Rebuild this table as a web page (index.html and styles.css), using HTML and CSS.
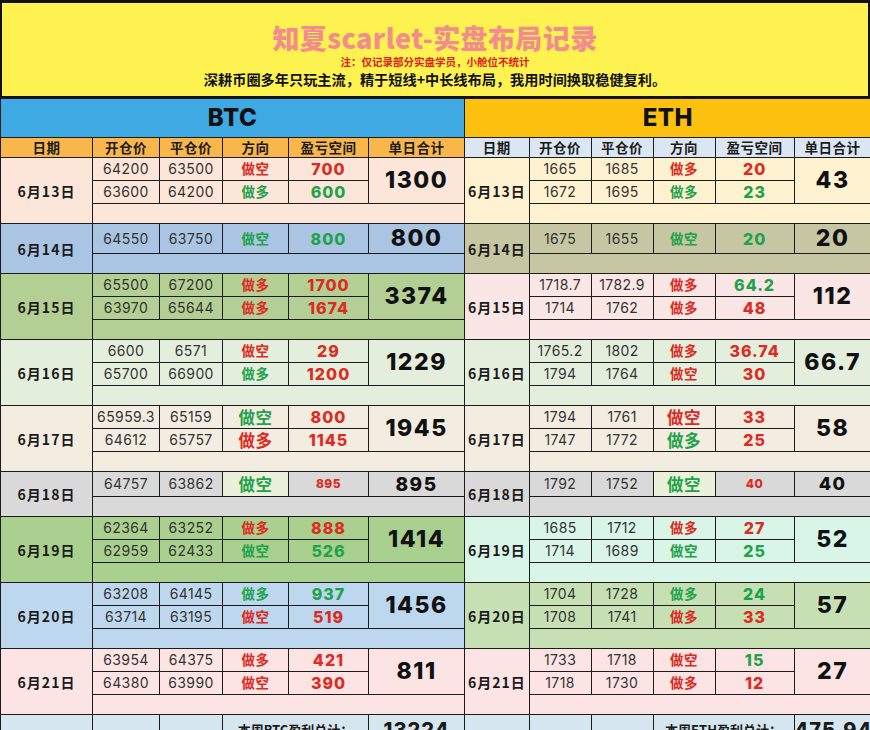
FILE: index.html
```html
<!DOCTYPE html>
<html lang="zh-CN">
<head>
<meta charset="utf-8">
<title>知夏scarlet-实盘布局记录</title>
<link rel="stylesheet" href="styles.css">
</head>
<body>
<header class="banner">
  <h1 class="title">知夏scarlet-实盘布局记录</h1>
  <p class="note">注：仅记录部分实盘学员，小舱位不统计</p>
  <p class="slogan">深耕币圈多年只玩主流，精于短线+中长线布局，我用时间换取稳健复利。</p>
</header>
<main class="sheet">
  <table class="book btc">
    <colgroup><col><col><col><col><col><col></colgroup>
    <thead>
      <tr class="coin-row"><th colspan="6" class="coin">BTC</th></tr>
      <tr class="cols"><th>日期</th><th>开仓价</th><th>平仓价</th><th>方向</th><th>盈亏空间</th><th>单日合计</th></tr>
    </thead>
    <tbody class="peach">
      <tr class="t"><td rowspan="3" class="date">6月13日</td><td class="px">64200</td><td class="px">63500</td><td class="dir r">做空</td><td class="pl r">700</td><td rowspan="2" class="total">1300</td></tr>
      <tr class="t"><td class="px">63600</td><td class="px">64200</td><td class="dir g">做多</td><td class="pl g">600</td></tr>
      <tr class="gap"><td colspan="5"></td></tr>
    </tbody>
    <tbody class="steel">
      <tr class="t1"><td rowspan="2" class="date">6月14日</td><td class="px">64550</td><td class="px">63750</td><td class="dir g">做空</td><td class="pl g">800</td><td class="total">800</td></tr>
      <tr class="gap"><td colspan="5"></td></tr>
    </tbody>
    <tbody class="olive">
      <tr class="t"><td rowspan="3" class="date">6月15日</td><td class="px">65500</td><td class="px">67200</td><td class="dir r">做多</td><td class="pl r">1700</td><td rowspan="2" class="total">3374</td></tr>
      <tr class="t"><td class="px">63970</td><td class="px">65644</td><td class="dir r">做多</td><td class="pl r">1674</td></tr>
      <tr class="gap"><td colspan="5"></td></tr>
    </tbody>
    <tbody class="mintpale">
      <tr class="t"><td rowspan="3" class="date">6月16日</td><td class="px">6600</td><td class="px">6571</td><td class="dir r">做空</td><td class="pl r">29</td><td rowspan="2" class="total">1229</td></tr>
      <tr class="t"><td class="px">65700</td><td class="px">66900</td><td class="dir g">做多</td><td class="pl r">1200</td></tr>
      <tr class="gap"><td colspan="5"></td></tr>
    </tbody>
    <tbody class="beige">
      <tr class="t"><td rowspan="3" class="date">6月17日</td><td class="px">65959.3</td><td class="px">65159</td><td class="dir big g">做空</td><td class="pl r">800</td><td rowspan="2" class="total">1945</td></tr>
      <tr class="t"><td class="px">64612</td><td class="px">65757</td><td class="dir big r">做多</td><td class="pl r">1145</td></tr>
      <tr class="gap"><td colspan="5"></td></tr>
    </tbody>
    <tbody class="grey">
      <tr class="t2"><td rowspan="2" class="date">6月18日</td><td class="px">64757</td><td class="px">63862</td><td class="dir big g hl">做空</td><td class="pl sm r">895</td><td class="total mid">895</td></tr>
      <tr class="gap"><td colspan="5"></td></tr>
    </tbody>
    <tbody class="green">
      <tr class="t"><td rowspan="3" class="date">6月19日</td><td class="px">62364</td><td class="px">63252</td><td class="dir r">做多</td><td class="pl r">888</td><td rowspan="2" class="total">1414</td></tr>
      <tr class="t"><td class="px">62959</td><td class="px">62433</td><td class="dir g">做空</td><td class="pl g">526</td></tr>
      <tr class="gap"><td colspan="5"></td></tr>
    </tbody>
    <tbody class="sky">
      <tr class="t"><td rowspan="3" class="date">6月20日</td><td class="px">63208</td><td class="px">64145</td><td class="dir g">做多</td><td class="pl g">937</td><td rowspan="2" class="total">1456</td></tr>
      <tr class="t"><td class="px">63714</td><td class="px">63195</td><td class="dir r">做空</td><td class="pl r">519</td></tr>
      <tr class="gap"><td colspan="5"></td></tr>
    </tbody>
    <tbody class="rose">
      <tr class="t"><td rowspan="3" class="date">6月21日</td><td class="px">63954</td><td class="px">64375</td><td class="dir r">做多</td><td class="pl r">421</td><td rowspan="2" class="total">811</td></tr>
      <tr class="t"><td class="px">64380</td><td class="px">63990</td><td class="dir r">做空</td><td class="pl r">390</td></tr>
      <tr class="gap"><td colspan="5"></td></tr>
    </tbody>
    <tbody class="sum">
      <tr class="s"><td></td><td></td><td></td><td colspan="2" class="label">本周BTC盈利总计：</td><td class="grand">13224</td></tr>
    </tbody>
  </table>

  <table class="book eth">
    <colgroup><col><col><col><col><col><col></colgroup>
    <thead>
      <tr class="coin-row"><th colspan="6" class="coin">ETH</th></tr>
      <tr class="cols"><th>日期</th><th>开仓价</th><th>平仓价</th><th>方向</th><th>盈亏空间</th><th>单日合计</th></tr>
    </thead>
    <tbody class="cream">
      <tr class="t"><td rowspan="3" class="date">6月13日</td><td class="px">1665</td><td class="px">1685</td><td class="dir r">做多</td><td class="pl r">20</td><td rowspan="2" class="total">43</td></tr>
      <tr class="t"><td class="px">1672</td><td class="px">1695</td><td class="dir g">做多</td><td class="pl g">23</td></tr>
      <tr class="gap"><td colspan="5"></td></tr>
    </tbody>
    <tbody class="khaki">
      <tr class="t1"><td rowspan="2" class="date">6月14日</td><td class="px">1675</td><td class="px">1655</td><td class="dir g">做空</td><td class="pl g">20</td><td class="total">20</td></tr>
      <tr class="gap"><td colspan="5"></td></tr>
    </tbody>
    <tbody class="blush">
      <tr class="t"><td rowspan="3" class="date">6月15日</td><td class="px">1718.7</td><td class="px">1782.9</td><td class="dir r">做多</td><td class="pl g">64.2</td><td rowspan="2" class="total">112</td></tr>
      <tr class="t"><td class="px">1714</td><td class="px">1762</td><td class="dir r">做多</td><td class="pl r">48</td></tr>
      <tr class="gap"><td colspan="5"></td></tr>
    </tbody>
    <tbody class="mintpale">
      <tr class="t"><td rowspan="3" class="date">6月16日</td><td class="px">1765.2</td><td class="px">1802</td><td class="dir r">做多</td><td class="pl r">36.74</td><td rowspan="2" class="total">66.7</td></tr>
      <tr class="t"><td class="px">1794</td><td class="px">1764</td><td class="dir r">做空</td><td class="pl r">30</td></tr>
      <tr class="gap"><td colspan="5"></td></tr>
    </tbody>
    <tbody class="beige">
      <tr class="t"><td rowspan="3" class="date">6月17日</td><td class="px">1794</td><td class="px">1761</td><td class="dir big r">做空</td><td class="pl r">33</td><td rowspan="2" class="total">58</td></tr>
      <tr class="t"><td class="px">1747</td><td class="px">1772</td><td class="dir big g">做多</td><td class="pl r">25</td></tr>
      <tr class="gap"><td colspan="5"></td></tr>
    </tbody>
    <tbody class="grey">
      <tr class="t2"><td rowspan="2" class="date">6月18日</td><td class="px">1792</td><td class="px">1752</td><td class="dir big g hl">做空</td><td class="pl sm r">40</td><td class="total small">40</td></tr>
      <tr class="gap"><td colspan="5"></td></tr>
    </tbody>
    <tbody class="aqua">
      <tr class="t"><td rowspan="3" class="date">6月19日</td><td class="px">1685</td><td class="px">1712</td><td class="dir r">做多</td><td class="pl r">27</td><td rowspan="2" class="total">52</td></tr>
      <tr class="t"><td class="px">1714</td><td class="px">1689</td><td class="dir g">做空</td><td class="pl g">25</td></tr>
      <tr class="gap"><td colspan="5"></td></tr>
    </tbody>
    <tbody class="leaf">
      <tr class="t"><td rowspan="3" class="date">6月20日</td><td class="px">1704</td><td class="px">1728</td><td class="dir g">做多</td><td class="pl g">24</td><td rowspan="2" class="total">57</td></tr>
      <tr class="t"><td class="px">1708</td><td class="px">1741</td><td class="dir r">做多</td><td class="pl r">33</td></tr>
      <tr class="gap"><td colspan="5"></td></tr>
    </tbody>
    <tbody class="rose">
      <tr class="t"><td rowspan="3" class="date">6月21日</td><td class="px">1733</td><td class="px">1718</td><td class="dir r">做空</td><td class="pl g">15</td><td rowspan="2" class="total">27</td></tr>
      <tr class="t"><td class="px">1718</td><td class="px">1730</td><td class="dir r">做多</td><td class="pl r">12</td></tr>
      <tr class="gap"><td colspan="5"></td></tr>
    </tbody>
    <tbody class="sum">
      <tr class="s"><td></td><td></td><td></td><td colspan="2" class="label">本周ETH盈利总计：</td><td class="grand">475.94</td></tr>
    </tbody>
  </table>
</main>
</body>
</html>
```

FILE: styles.css
```css
html, body {
  margin: 0;
  padding: 0;
  overflow: hidden;
  background: #ffffff;
}
body {
  width: 870px;
  font-family: "Noto Sans CJK SC", "Noto Sans", sans-serif;
  color: #1a1a1a;
}

/* ---------- banner ---------- */
.banner {
  box-sizing: border-box;
  height: 98px;
  background: #fdf24f;
  border: 2px solid #111;
  border-top-width: 3px;
  padding-top: 19px;
  text-align: center;
}
.title {
  margin: 0;
  font-size: 27px;
  line-height: 31px;
  font-weight: 900;
  color: #f38d8d;
  letter-spacing: 0.4px;
}
.note {
  margin: 3px 0 0;
  font-size: 10.5px;
  line-height: 12px;
  font-weight: 700;
  color: #e0201c;
}
.slogan {
  margin: 3px 0 0;
  font-size: 14.2px;
  line-height: 16px;
  font-weight: 700;
  color: #111;
}

/* ---------- sheet ---------- */
.sheet {
  display: flex;
  align-items: flex-start;
}
.book {
  border-collapse: collapse;
  table-layout: fixed;
  flex: none;
}
.btc { width: 464px; }
.eth { width: 406px; }
.btc col:nth-child(1) { width: 92px; }
.btc col:nth-child(2) { width: 67px; }
.btc col:nth-child(3) { width: 63px; }
.btc col:nth-child(4) { width: 66px; }
.btc col:nth-child(5) { width: 80px; }
.btc col:nth-child(6) { width: 96px; }
.eth col:nth-child(1) { width: 64px; }
.eth col:nth-child(2) { width: 62px; }
.eth col:nth-child(3) { width: 62px; }
.eth col:nth-child(4) { width: 62px; }
.eth col:nth-child(5) { width: 79px; }
.eth col:nth-child(6) { width: 77px; }

.book th, .book td {
  border: 1px solid #1b1b1b;
  padding: 0;
  text-align: center;
  vertical-align: middle;
  white-space: nowrap;
  overflow: hidden;
  line-height: 1;
}
.eth > thead > tr > th:first-child,
.eth > tbody > tr > td:first-child {
  border-left: none;
}

.coin-row { height: 39px; }
.coin {
  font-family: "Inter", "Noto Sans", sans-serif;
  font-size: 24px;
  font-weight: 800;
  color: #111;
  letter-spacing: 0.5px;
}
.btc .coin { background: #3ea9e2; }
.eth .coin { background: #fdc00f; }

.cols { height: 20px; }
.cols th {
  font-size: 13.5px;
  font-weight: 700;
  color: #1b1b1b;
  letter-spacing: 0.5px;
}
.btc .cols th { background: #f8b64b; }
.eth .cols th { background: #dbe6f3; }

.t { height: 23px; }
.t1 { height: 30px; }
.t2 { height: 25px; }
.gap { height: 20px; }
.s { height: 30px; }

.date {
  font-size: 14px;
  font-weight: 700;
  letter-spacing: 1px;
  color: #1b1b1b;
}
.px {
  font-family: "Inter", "Noto Sans", sans-serif;
  font-size: 14px;
  font-weight: 400;
  color: #333;
  letter-spacing: 0.4px;
}
.dir {
  font-size: 13.5px;
  font-weight: 700;
  letter-spacing: 0.5px;
}
.dir.big { font-size: 16.5px; }
.pl {
  font-family: "Inter", "Noto Sans", sans-serif;
  font-size: 16px;
  font-weight: 800;
  letter-spacing: 1px;
}
.pl.sm { font-size: 12px; letter-spacing: 0.5px; }
.r { color: #dd2a22; }
.g { color: #1fa24b; }
.total {
  font-family: "Inter", "Noto Sans", sans-serif;
  font-size: 23px;
  font-weight: 800;
  letter-spacing: 1.5px;
  color: #111;
}
.total.mid { font-size: 19px; }
.total.small { font-size: 18px; }

.label {
  font-size: 13px;
  font-weight: 700;
  vertical-align: top;
  padding-top: 5px;
}
.grand {
  font-family: "Inter", "Noto Sans", sans-serif;
  font-size: 20px;
  font-weight: 800;
  letter-spacing: 1px;
  vertical-align: top;
  padding-top: 4px;
}

/* ---------- day colours ---------- */
.peach td { background: #fce5d9; }
.steel td { background: #a9c5e3; }
.olive td { background: #b4cf93; }
.mintpale td { background: #e3efdc; }
.beige td { background: #f2ede0; }
.grey td { background: #d9d9d9; }
.green td { background: #a9d08e; }
.sky td { background: #bdd7ee; }
.rose td { background: #fce4e4; }
.cream td { background: #fff2d0; }
.khaki td { background: #c6c6a3; }
.blush td { background: #fae6e5; }
.aqua td { background: #d8f5e8; }
.leaf td { background: #c6e0b4; }
.sum td { background: #d6e6ef; }
.grey td.hl { background: #eaf0da; }
```
